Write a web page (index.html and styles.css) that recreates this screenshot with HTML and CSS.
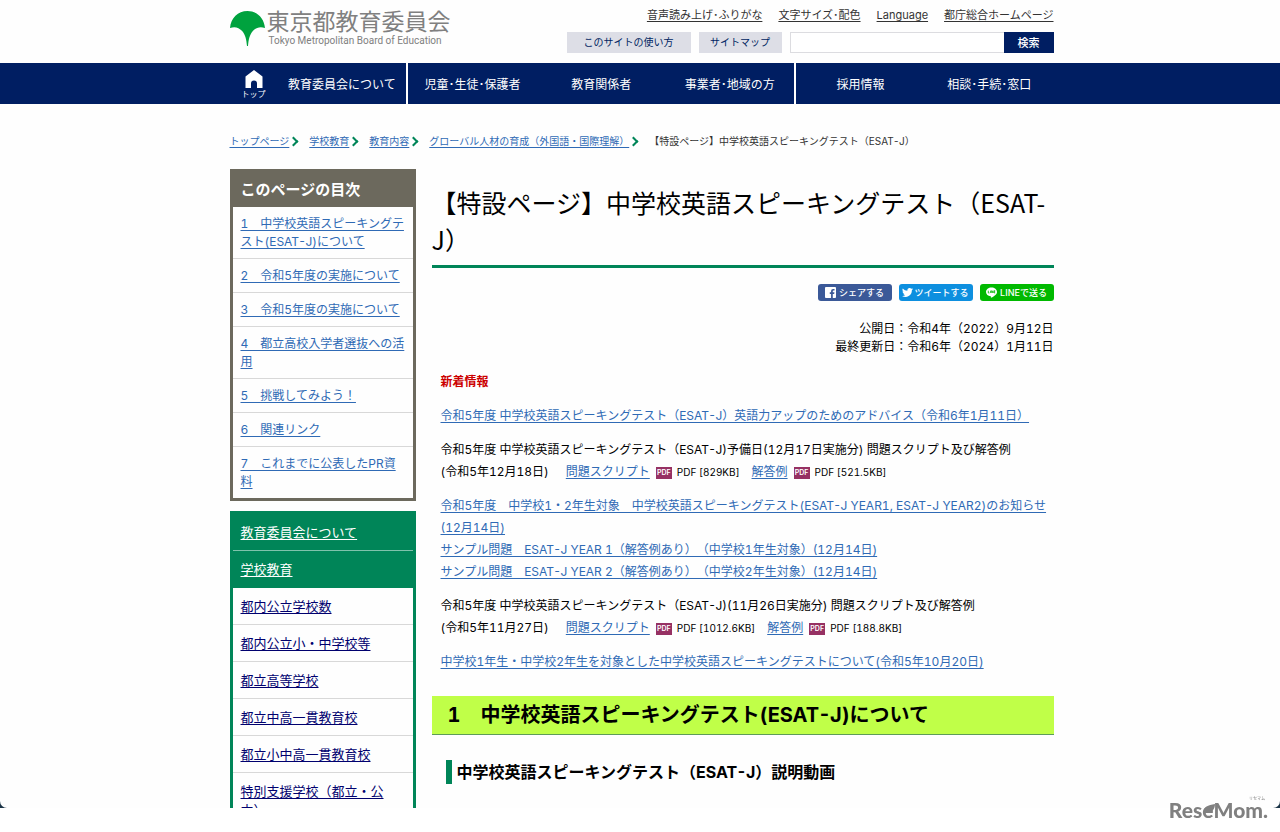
FILE: index.html
```html
<!DOCTYPE html>
<html lang="ja">
<head>
<meta charset="utf-8">
<title>【特設ページ】中学校英語スピーキングテスト（ESAT-J）</title>
<link rel="stylesheet" href="styles.css">
</head>
<body>
<div class="frame">
<div class="screen">
  <header class="wrap header">
    <a class="logo" href="#">
      <svg class="logo-mark" viewBox="0 0 36 36" aria-hidden="true"><path d="M0 17.500C1 7 8 0 18 0s17 7 18 17.500c-5-2-9-.5-12.500 3C20 24.500 19 30 18.500 36h-1C17 30 16 24.500 12.500 20.500 9 17 5 15.500 0 17.500z" fill="#00a23e"/></svg>
      <span class="logo-text"><span class="logo-ja">東京都教育委員会</span><span class="logo-en">Tokyo Metropolitan Board of Education</span></span>
    </a>
    <div class="tools">
      <ul class="tool-links">
        <li><a href="#">音声読み上げ･ふりがな</a></li>
        <li><a href="#">文字サイズ･配色</a></li>
        <li><a href="#">Language</a></li>
        <li><a href="#">都庁総合ホームページ</a></li>
      </ul>
      <div class="tool-row">
        <a class="tool-btn wide" href="#">このサイトの使い方</a>
        <a class="tool-btn" href="#">サイトマップ</a>
        <form class="search"><input type="text" aria-label="サイト内検索"><button type="button">検索</button></form>
      </div>
    </div>
  </header>
  <nav class="gnav">
    <ul class="wrap gnav-list">
      <li class="home"><a href="#"><svg viewBox="0 0 18 18" aria-hidden="true"><path d="M9 0l8.500 6.500V18h-5.500v-4.500a3 3 0 0 0-6 0V18H.5V6.500z" fill="#fff"/></svg><span>トップ</span></a></li>
      <li class="split"><a href="#">教育委員会について</a></li>
      <li><a href="#">児童･生徒･保護者</a></li>
      <li><a href="#">教育関係者</a></li>
      <li class="split"><a href="#">事業者･地域の方</a></li>
      <li><a href="#">採用情報</a></li>
      <li><a href="#">相談･手続･窓口</a></li>
    </ul>
  </nav>
  <ol class="wrap crumbs">
    <li><a href="#">トップページ</a></li>
    <li><a href="#">学校教育</a></li>
    <li><a href="#">教育内容</a></li>
    <li><a href="#">グローバル人材の育成（外国語・国際理解）</a></li>
    <li>【特設ページ】中学校英語スピーキングテスト（ESAT-J）</li>
  </ol>
  <div class="wrap columns">
    <aside class="side">
      <nav class="toc">
        <h2>このページの目次</h2>
        <ul>
          <li><a href="#">1　中学校英語スピーキングテスト(ESAT-J)について</a></li>
          <li><a href="#">2　令和5年度の実施について</a></li>
          <li><a href="#">3　令和5年度の実施について</a></li>
          <li><a href="#">4　都立高校入学者選抜への活用</a></li>
          <li><a href="#">5　挑戦してみよう！</a></li>
          <li><a href="#">6　関連リンク</a></li>
          <li><a href="#">7　これまでに公表したPR資料</a></li>
        </ul>
      </nav>
      <nav class="local">
        <ul>
          <li class="parent"><a href="#">教育委員会について</a></li>
          <li class="parent"><a href="#">学校教育</a></li>
          <li><a href="#">都内公立学校数</a></li>
          <li><a href="#">都内公立小・中学校等</a></li>
          <li><a href="#">都立高等学校</a></li>
          <li><a href="#">都立中高一貫教育校</a></li>
          <li><a href="#">都立小中高一貫教育校</a></li>
          <li><a href="#">特別支援学校（都立・公立）</a></li>
        </ul>
      </nav>
    </aside>
    <main class="main">
      <h1>【特設ページ】中学校英語スピーキングテスト（ESAT-J）</h1>
      <div class="share">
        <a class="fb" href="#"><svg viewBox="0 0 12 12" aria-hidden="true"><path fill="#fff" d="M1 0h10a1 1 0 0 1 1 1v10a1 1 0 0 1-1 1H8.500V7.500H10L10.300 5.700H8.500V4.500q0-.8.900-.8h1V2.100H8.800Q6.600 2.100 6.600 4.300v1.400H5.200v1.800h1.400V12H1a1 1 0 0 1-1-1V1a1 1 0 0 1 1-1z"/></svg>シェアする</a>
        <a class="tw" href="#"><svg viewBox="0 0 24 24" aria-hidden="true"><path fill="#fff" d="M24 4.600a10 10 0 0 1-2.800.8 5 5 0 0 0 2.200-2.700 10 10 0 0 1-3.100 1.200 4.900 4.900 0 0 0-8.400 4.500A14 14 0 0 1 1.700 3.200a4.900 4.900 0 0 0 1.500 6.500 5 5 0 0 1-2.200-.6 4.900 4.900 0 0 0 3.900 4.900 5 5 0 0 1-2.200.1 4.900 4.900 0 0 0 4.600 3.400A10 10 0 0 1 0 19.500 14 14 0 0 0 21.500 7.100 10 10 0 0 0 24 4.600z"/></svg>ツイートする</a>
        <a class="line" href="#"><svg viewBox="0 0 24 24" aria-hidden="true"><path fill="#fff" d="M12 1C5.400 1 0 5.300 0 10.700c0 4.800 4.300 8.800 10 9.600 1.200.3.800 1.500.6 3.200 5-2.300 13.400-7 13.400-12.800C24 5.300 18.600 1 12 1z"/><path stroke="#00b900" stroke-width="1.800" fill="none" d="M5 8v5h2.500M10 8v5M12.500 13V8l3 5V8M20 8h-2v5h2M18 10.500h2"/></svg>LINEで送る</a>
      </div>
      <p class="dates">公開日：令和4年（2022）9月12日<br>最終更新日：令和6年（2024）1月11日</p>
      <div class="news">
        <p class="news-title">新着情報</p>
        <p><a href="#">令和5年度 中学校英語スピーキングテスト（ESAT-J）英語力アップのためのアドバイス（令和6年1月11日）</a></p>
        <p>令和5年度 中学校英語スピーキングテスト（ESAT-J)予備日(12月17日実施分) 問題スクリプト及び解答例<br>(令和5年12月18日)　<a class="doc" href="#">問題スクリプト</a><span class="pdf">PDF</span><small>PDF [829KB]</small>　<a href="#">解答例</a><span class="pdf">PDF</span><small>PDF [521.5KB]</small></p>
        <p><a href="#">令和5年度　中学校1・2年生対象　中学校英語スピーキングテスト(ESAT-J YEAR1, ESAT-J YEAR2)のお知らせ<span class="date">(12月14日)</span></a><br><a href="#">サンプル問題　ESAT-J YEAR 1（解答例あり）（中学校1年生対象）(12月14日)</a><br><a href="#">サンプル問題　ESAT-J YEAR 2（解答例あり）（中学校2年生対象）(12月14日)</a></p>
        <p>令和5年度 中学校英語スピーキングテスト（ESAT-J)(11月26日実施分) 問題スクリプト及び解答例<br>(令和5年11月27日)　<a class="doc" href="#">問題スクリプト</a><span class="pdf">PDF</span><small>PDF [1012.6KB]</small>　<a href="#">解答例</a><span class="pdf">PDF</span><small>PDF [188.8KB]</small></p>
        <p><a href="#">中学校1年生・中学校2年生を対象とした中学校英語スピーキングテストについて(令和5年10月20日)</a></p>
      </div>
      <h2>1　中学校英語スピーキングテスト(ESAT-J)について</h2>
      <h3>中学校英語スピーキングテスト（ESAT-J）説明動画</h3>
    </main>
  </div>
</div>
</div>
<div class="credit"><span class="credit-ruby">リセマム</span><span class="credit-name">Res<span class="leaf">e<svg viewBox="0 0 12 12" aria-hidden="true"><path fill="#808080" d="M1 8C0 3 5 1 12 0c0 5-3 9-8 8.500z"/></svg></span>Mom.</span></div>
</body>
</html>
```
FILE: styles.css
```css
* { box-sizing: border-box; }
body {
  margin: 0;
  background: #fff;
  color: #000;
  font-family: Inter, "Noto Sans CJK JP", sans-serif;
  font-size: 12px;
  font-variant-numeric: tabular-nums;
  text-spacing-trim: space-all;
}
ul, ol { list-style: none; margin: 0; padding: 0; }
h1, h2, h3, p { margin: 0; }
a { color: #2f6ab5; text-underline-offset: 2px; }

.frame { height: calc(100vh - 24px); background: #1b3447; overflow: hidden; }
.screen { height: 100%; background: #fefefe; border-radius: 0 0 7px 7px; overflow: hidden; }
.wrap { box-sizing: content-box; max-width: 824px; margin: 0 auto; padding-left: 3px; }

.header { display: flex; justify-content: space-between; height: 63px; }
.logo { display: flex; gap: 2px; padding-top: 11px; color: #808080; text-decoration: none; }
.logo-mark { width: 35px; height: 35px; }
.logo-text { display: flex; flex-direction: column; }
.logo-ja { font-size: 23px; line-height: 23px; }
.logo-en { padding-left: 2px; font: 10px/14px Roboto, sans-serif; }
.tools { display: flex; flex-direction: column; align-items: flex-end; gap: 8px; padding-top: 6px; }
.tool-links { display: flex; gap: 16px; font-size: 11px; line-height: 18px; }
.tool-links a { color: #333; }
.tool-row { display: flex; gap: 8px; height: 21px; }
.tool-btn { width: 83px; background: #dddee6; color: #001e62; font-size: 10px; line-height: 21px; text-align: center; text-decoration: none; }
.wide { width: 124px; }
.search { display: flex; }
.search input { width: 214px; border: 1px solid #dcdce0; border-right: 0; padding: 0 4px; background: #fff; }
.search button { width: 50px; border: 0; padding: 0 0 2px; background: #001e62; color: #fff; font: 500 11px Inter, "Noto Sans CJK JP", sans-serif; }

.gnav { background: #001e62; }
.gnav-list { display: flex; height: 41px; }
.gnav-list li { flex: 1; display: flex; align-items: center; justify-content: center; }
.gnav-list .home { flex: 0 0 48px; }
.gnav-list .split { border-right: 2px solid #fff; }
.gnav-list a { color: #fff; text-decoration: none; }
.home a { display: flex; flex-direction: column; align-items: center; padding-top: 2px; font-size: 8px; line-height: 12px; }
.home svg { width: 18px; height: 18px; }

.crumbs { display: flex; padding-top: 28px; font-size: 10px; line-height: 18px; color: #333; }
.crumbs li { display: flex; align-items: center; }
.crumbs li + li::before {
  content: "";
  width: 5px;
  height: 5px;
  margin: 0 12px 0 1px;
  border: solid #008558;
  border-width: 2px 2px 0 0;
  transform: rotate(45deg);
}

.columns { display: flex; gap: 16px; padding-top: 19px; align-items: flex-start; }
.side { flex: 0 0 186px; display: flex; flex-direction: column; gap: 10px; }
.toc { border: 3px solid #6c695d; }
.toc h2 { background: #6c695d; color: #fff; padding: 0 8px; font-size: 15px; line-height: 35px; }
.toc li { padding: 8px 7px 7px 8px; border-bottom: 1px solid #d8d8d8; line-height: 18px; }
.toc li:last-child, .local li:last-child { border-bottom: 0; }
.local { border: 3px solid #008558; font-size: 13px; line-height: 19px; }
.local li { padding: 9px 8px 8px; border-bottom: 1px solid #d8d8d8; }
.local a { color: #00006e; }
.local .parent { background: #008558; border-color: #7fc2ab; }
.local .parent + .parent { border-color: #008558; }
.local .parent a { color: #fff; }

.main { flex: 1; min-width: 0; }
.main h1 { padding: 15px 0 7px; border-bottom: 3px solid #008558; font: 400 25px/37px "Noto Sans CJK JP", sans-serif; }
.share { display: flex; justify-content: flex-end; gap: 7px; padding-top: 16px; }
.share a { display: flex; align-items: center; justify-content: center; gap: 3px; width: 74px; height: 17px; border-radius: 3px; color: #fff; font-size: 9px; font-weight: 500; text-decoration: none; white-space: nowrap; }
.share svg { width: 11px; height: 11px; }
.share .tw { gap: 1px; }
.fb { background: #3b5998; }
.tw { background: #0d8fdf; }
.line { background: #00b900; }
.dates { padding: 19px 0 15px; text-align: right; line-height: 18px; }
.news { display: flex; flex-direction: column; gap: 12px; padding-left: 9px; line-height: 22px; }
.news-title { color: #c00; font-weight: 700; }
.date { white-space: nowrap; }
.doc { margin-left: 5px; }
.news small { font-size: 10px; }
.pdf { display: inline-block; margin: 0 5px 0 6px; width: 16px; height: 12px; background: #963163; color: #fff; font-size: 7px; font-weight: 600; line-height: 12px; text-align: center; vertical-align: middle; }
.main h2 { margin-top: 23px; padding: 0 16px; background: #c0ff48; border-bottom: 1px solid #5d9c58; font-size: 20px; line-height: 38px; }
.main h3 { margin: 25px 0 0 14px; padding-left: 5px; border-left: 6px solid #008558; font-size: 16px; line-height: 24px; }

.credit { position: fixed; right: 12px; bottom: 12px; color: #808080; }
.credit-name { display: flex; align-items: center; font: 900 21px/20px Lato, sans-serif; }
.leaf { position: relative; }
.leaf svg { position: absolute; left: 1px; top: 4px; width: 12px; height: 12px; }
.credit-ruby { position: absolute; right: 3px; top: -4px; font-size: 4px; line-height: 5px; }
```
